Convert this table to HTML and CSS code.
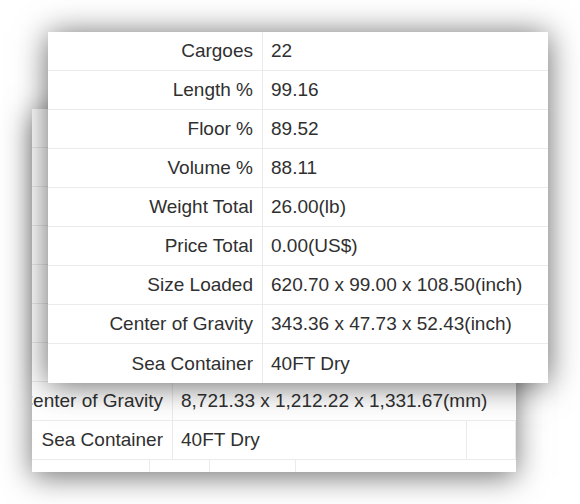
FILE: index.html
```html
<!DOCTYPE html>
<html>
<head>
<meta charset="utf-8">
<link rel="stylesheet" href="styles.css">
</head>
<body>
<div class="stage">
  <div class="card card-back">
    <div class="row"><div class="lbl"></div><div class="val wide"></div></div>
    <div class="row"><div class="lbl"></div><div class="val wide"></div></div>
    <div class="row"><div class="lbl"></div><div class="val wide"></div></div>
    <div class="row"><div class="lbl"></div><div class="val wide"></div></div>
    <div class="row"><div class="lbl"></div><div class="val wide"></div></div>
    <div class="row"><div class="lbl"></div><div class="val wide"></div></div>
    <div class="row"><div class="lbl"></div><div class="val wide"></div></div>
    <div class="row"><div class="lbl">Center of Gravity</div><div class="val wide">8,721.33 x 1,212.22 x 1,331.67(mm)</div></div>
    <div class="row"><div class="lbl">Sea Container</div><div class="val">40FT Dry</div><div class="val"></div></div>
    <div class="row row-four"><div class="cell"></div><div class="cell"></div><div class="cell"></div><div class="cell last"></div></div>
  </div>

  <div class="card card-front">
    <div class="row"><div class="lbl">Cargoes</div><div class="val">22</div></div>
    <div class="row"><div class="lbl">Length %</div><div class="val">99.16</div></div>
    <div class="row"><div class="lbl">Floor %</div><div class="val">89.52</div></div>
    <div class="row"><div class="lbl">Volume %</div><div class="val">88.11</div></div>
    <div class="row"><div class="lbl">Weight Total</div><div class="val">26.00(lb)</div></div>
    <div class="row"><div class="lbl">Price Total</div><div class="val">0.00(US$)</div></div>
    <div class="row"><div class="lbl">Size Loaded</div><div class="val">620.70 x 99.00 x 108.50(inch)</div></div>
    <div class="row"><div class="lbl">Center of Gravity</div><div class="val">343.36 x 47.73 x 52.43(inch)</div></div>
    <div class="row last-row"><div class="lbl">Sea Container</div><div class="val">40FT Dry</div></div>
  </div>
</div>
</body>
</html>
```

FILE: styles.css
```css
html, body {
  margin: 0;
  padding: 0;
  background: #ffffff;
}

.stage {
  position: relative;
  width: 580px;
  height: 504px;
  overflow: hidden;
  font-family: "Liberation Sans", Arial, sans-serif;
  font-size: 19px;
  color: #303030;
}

.card {
  background: #ffffff;
  box-sizing: border-box;
}

.card-back {
  margin-left: 32px;
  margin-top: 109px;
  width: 484px;
  height: 363px;
  overflow: hidden;
  box-shadow: 0 5px 28px rgba(0, 0, 0, 0.55);
}

.card-front {
  position: absolute;
  left: 48px;
  top: 32px;
  width: 500px;
  height: 351px;
  box-shadow: 0 2px 30px rgba(0, 0, 0, 0.6);
}

.row {
  display: grid;
  height: 39px;
  box-sizing: border-box;
  border-bottom: 1px solid #ebebeb;
}

.card-front .row {
  grid-template-columns: 215px 1fr;
}

.card-front .last-row {
  border-bottom: none;
}

.card-back .row {
  grid-template-columns: 141px 294px 1fr;
}

.card-back .row-four {
  grid-template-columns: 118px 60px 86px 1fr;
  border-bottom: none;
}

.lbl {
  display: flex;
  justify-content: flex-end;
  align-items: center;
  white-space: nowrap;
  padding-right: 9px;
  border-right: 1px solid #ebebeb;
  min-width: 0;
}

.val {
  display: flex;
  align-items: center;
  white-space: nowrap;
  padding-left: 8px;
  min-width: 0;
}

.card-back .val {
  border-right: 1px solid #ebebeb;
}

.card-back .val.wide {
  grid-column: span 2;
  border-right: none;
}

.cell {
  border-right: 1px solid #ebebeb;
}

.cell.last {
  border-right: none;
}
```
